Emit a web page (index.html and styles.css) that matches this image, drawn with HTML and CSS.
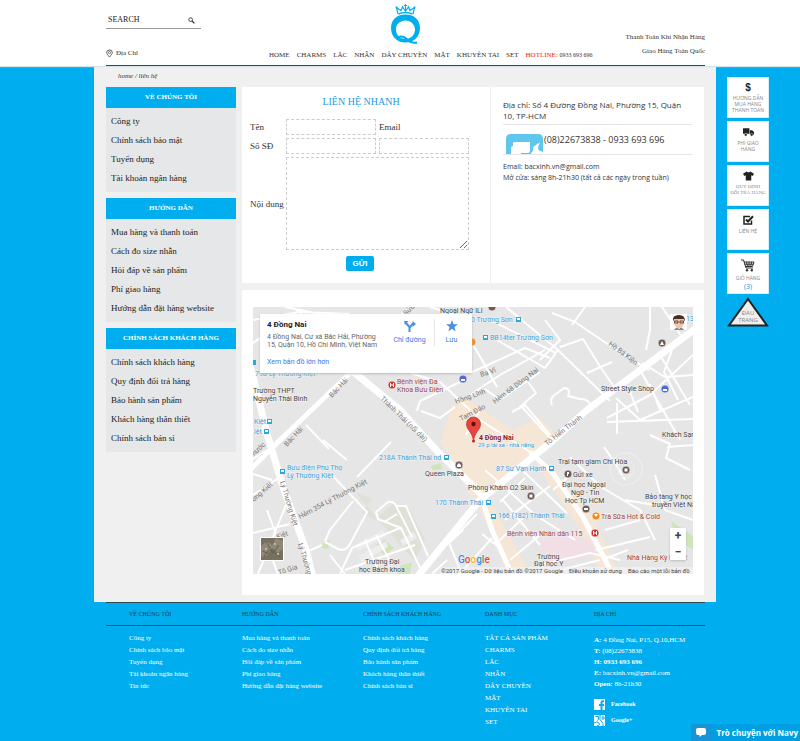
FILE: index.html
```html
<!DOCTYPE html>
<html lang="vi">
<head>
<meta charset="utf-8">
<meta name="viewport" content="width=device-width, initial-scale=1">
<title>Liên hệ</title>
<link rel="stylesheet" href="styles.css">
</head>
<body>
<header class="site-header">
  <div class="header-inner">
    <form class="search">
      <input type="text" aria-label="Search" placeholder="SEARCH">
      <button type="submit" aria-label="Search">
        <svg viewBox="0 0 8 8" width="7" height="7"><circle cx="3" cy="3" r="2.1" fill="none" stroke="#333" stroke-width="1"/><path d="M4.6 4.6 7.3 7.3" stroke="#333" stroke-width="1.4"/></svg>
      </button>
    </form>
    <a class="logo" href="#" aria-label="Home">
      <svg viewBox="390 2 32 43" width="32" height="43">
        <g fill="none" stroke="#00aeef">
          <path d="M398 14 396.500 7.500 401 10.500 402.500 7 405.500 11 408.500 7 410 10.500 414.500 7.500 413 14" stroke-width="1.200"/>
          <path d="M405.500 4V10M403.800 5.500H407.200" stroke-width="1"/>
          <path d="M398.500 14Q405.500 11 412.500 14" stroke-width="1.600"/>
        </g>
        <g fill="#00aeef"><circle cx="396.500" cy="7.500" r=".9"/><circle cx="402.500" cy="7" r=".8"/><circle cx="408.500" cy="7" r=".8"/><circle cx="414.500" cy="7.500" r=".9"/></g>
        <path fill="#00aeef" fill-rule="evenodd" d="M405.500 14.500C396 14.500 391 20.500 391 28.200S396.500 42.500 405.500 42.500 420 36 420 28.200 415 14.500 405.500 14.500ZM405.500 20.500C411 20.500 415 24.500 415 29.500S411 39 405.500 39 396 35 396 29.500 400 20.500 405.500 20.500Z"/>
        <path d="M398 40C397 35.500 403 35.500 406 38.500S412 43.500 417 42.500" fill="none" stroke="#00aeef" stroke-width="2"/>
      </svg>
    </a>
    <a class="place" href="#">
      <svg viewBox="0 0 8 9" width="7" height="9"><path d="M4 8.500C2 6 .8 4.800.8 3.400a3.200 2.900 0 0 1 6.400 0C7.200 4.800 6 6 4 8.500Z" fill="none" stroke="#444"/><circle cx="4" cy="3.500" r="1.200" fill="none" stroke="#444" stroke-width=".8"/></svg>
      Địa Chỉ
    </a>
    <nav class="main-nav">
      <a href="#">HOME</a><a href="#">CHARMS</a><a href="#">LẮC</a><a href="#">NHẪN</a><a href="#">DÂY CHUYỀN</a><a href="#">MẶT</a><a href="#">KHUYÊN TAI</a><a href="#">SET</a>
      <span><b class="hot">HOTLINE:</b> <span class="number">0933 693 696</span></span>
    </nav>
    <div class="promo"><span>Thanh Toán Khi Nhận Hàng</span><span>Giao Hàng Toàn Quốc</span></div>
  </div>
</header>

<div class="page">
  <main class="wrapper">
    <p class="crumbs">home / liên hệ</p>
    <div class="columns">
      <aside class="sidebar">
        <section><h2>VỀ CHÚNG TÔI</h2>
          <ul><li><a href="#">Công ty</a></li><li><a href="#">Chính sách bảo mật</a></li><li><a href="#">Tuyển dụng</a></li><li><a href="#">Tài khoản ngân hàng</a></li></ul></section>
        <section><h2>HƯỚNG DẪN</h2>
          <ul><li><a href="#">Mua hàng và thanh toán</a></li><li><a href="#">Cách đo size nhẫn</a></li><li><a href="#">Hỏi đáp về sản phẩm</a></li><li><a href="#">Phí giao hàng</a></li><li><a href="#">Hướng dẫn đặt hàng website</a></li></ul></section>
        <section><h2>CHÍNH SÁCH KHÁCH HÀNG</h2>
          <ul><li><a href="#">Chính sách khách hàng</a></li><li><a href="#">Quy định đổi trả hàng</a></li><li><a href="#">Bảo hành sản phẩm</a></li><li><a href="#">Khách hàng thân thiết</a></li><li><a href="#">Chính sách bán sỉ</a></li></ul></section>
      </aside>

      <div class="content">
        <div class="contact">
          <form class="quick">
            <h1>LIÊN HỆ NHANH</h1>
            <div class="fields">
              <label for="name">Tên</label><input id="name" type="text"><label for="email">Email</label>
              <label for="phone">Số SĐ</label><input id="phone" type="text"><input id="email" type="text">
              <label for="body">Nội dung</label><textarea id="body"></textarea>
            </div>
            <button type="submit">GỬI</button>
          </form>
          <div class="info">
            <p class="address">Địa chỉ: Số 4 Đường Đồng Nai, Phường 15, Quận 10, TP-HCM</p>
            <p class="phone">
              <svg viewBox="0 0 37 20" width="37" height="20"><path d="M0 20V5Q0 0 5 0H32Q37 0 37 5V20Z" fill="#5fc6ee"/><path d="M5 20V14Q5 12 7 12V9Q7 8 9 8H24V17Q24 19 22 19H15V20ZM25 20Q25 18 27 17V14Q27 12 29 12Q31 9 34 9Q32 12 32 15Q33 17 37 18V20Z" fill="#fff"/></svg>
              <span>(08)22673838 - 0933 693 696</span>
            </p>
            <p class="hours">Email: bacxinh.vn@gmail.com<br>Mở cửa: sáng 8h-21h30 (tất cả các ngày trong tuần)</p>
          </div>
        </div>

        <section class="map-card">
          <div class="map">
            <svg class="map-art" viewBox="253 307 440 267" preserveAspectRatio="xMidYMid slice">
              <rect x="253" y="307" width="440" height="267" fill="#e6e6e6"/>
              <g fill="#f6e6d6">
                <path d="M452 405 466 398 482 409 540 449 528 468 497 482 472 487 440 442Z"/>
                <path d="M513 430 540 417 560 440 535 458 516 444Z"/>
                <path d="M535 462 552 468 592 516 620 574H602L580 530Z"/>
                <path d="M476 500 490 500 530 574H508Z"/>
                <path d="M466 490 480 480 484 494 474 500Z"/>
              </g>
              <path d="M537 543 560 530 590 540 598 555 545 566Z" fill="#f2dfe5"/>
              <g fill="#cfe5b8"><path d="M671 521 693 536V550L676 538Z"/><path d="M376 545 385 540 394 548 384 556Z"/><path d="M323 543 330 540 328 549 321 548Z"/><path d="M431 466 441 463 442 469 433 470Z"/><path d="M400 566 412 562 410 574H398Z"/></g>
              <path d="M355 492 372 499 362 512 375 520 393 504 410 510 425 540 415 560 400 545" fill="#dfe0d6"/>
              <g fill="#ededed"><path d="M355 545 383 530 386 536 358 551ZM358 556 386 541 388 547 362 562ZM400 540 414 532 417 538 403 546Z"/></g>
              <g fill="none" stroke="#fff" stroke-linejoin="round">
                <g stroke-width="7">
                  <path d="M417 577 480 500 550 443 587 410 627 380 696 328"/>
                  <path d="M250 365 268 437 283 487 306 550 313 577"/>
                  <path d="M345 365 400 410 438 452 480 493"/>
                </g>
                <g stroke-width="5">
                  <path d="M350 373 277 443 250 470"/>
                  <path d="M480 493 492 530 513 577"/>
                  <path d="M530 452 552 472 583 517 614 577"/>
                </g>
                <g stroke-width="2">
                  <path d="M470 340 482 360 497 387M470 373 525 348 550 358M497 340 545 368 558 350 506 307M492 321 556 353M470 395 500 375 545 350"/>
                  <path d="M558 350 610 401M545 320 560 340 540 360M552 313 575 322 612 347 649 370M585 307 572 325M560 347 583 339 601 368 617 391M587 373 612 362"/>
                  <path d="M522 407 550 438M512 412 525 405 550 435M528 382 536 393 520 407M552 405Q549 398 556 394L564 388Q571 388 568 396L580 399Q590 398 592 410L588 408"/>
                  <path d="M650 307V330L646 350M662 307 682 337M693 355 650 395 607 418M642 363 665 377 693 375M640 370 680 440M660 355 690 405M616 398 640 420 693 397M607 422 693 419M617 403V434M650 384 660 410M630 392 638 412M672 350 664 372 678 400"/>
                  <path d="M410 373 440 382 470 410M480 410 466 435M417 411 420 401 460 382M421 411 440 418 455 407M485 389 500 400 540 372M480 420 535 455"/>
                  <path d="M253 320 300 312 350 314M294 308 306 318M285 307 320 314M253 343 260 338M410 307 400 316M430 307 460 316"/>
                  <path d="M306 425 329 449M323 440 347 460M253 431 262 429 269 445M253 459 267 450M253 495 283 475M253 474 272 480M258 574 286 505M267 510 280 545M253 533 290 524M265 540 278 574"/>
                  <path d="M330 473 367 512 350 544Q346 552 338 549L325 542M325 541 330 530 353 501M306 552 322 545M357 477 391 442"/>
                  <path d="M423 574 401 528 378 519 376 512 388 502Q394 501 396 506L412 537M384 522 397 514M340 574 352 548 400 528M345 570 415 545M330 555 345 574M365 540 378 570M376 535 392 565M396 506 406 506 428 556"/>
                  <path d="M463 530 449 543 462 574M449 543 477 514M460 574 492 538M432 574 447 560M482 534 500 548"/>
                  <path d="M485 470 510 492 535 515 575 540M500 502 525 478M505 520 550 486M500 540 525 516M510 560 540 535M503 500 540 545M520 468 545 492 567 513M570 457 601 487 640 510 655 540M567 478 553 490"/>
                  <path d="M604 447 615 463 625 480M650 435 670 444 666 458 690 470M693 445 667 447M655 475 665 510 693 520M625 500 655 505M602 560 628 550M605 530 640 520M596 550 650 537M540 565 590 553 620 560M545 574 600 560"/>
                </g>
                <g stroke="#ededed" stroke-width="1.500"><circle cx="626" cy="469" r="16"/><circle cx="626" cy="469" r="8"/></g>
              </g>
              <g class="road">
                <text transform="translate(287 447) rotate(-47)">Bắc Hải</text><text transform="translate(332 398) rotate(-47)">Bắc Hải</text>
                <text transform="translate(380 399) rotate(44)">Thành Thái (nối dài)</text>
                <text transform="translate(456 404) rotate(-20)">Hồng Lĩnh</text><text transform="translate(461 421) rotate(-27)">Tam Đảo</text>
                <text transform="translate(481 377) rotate(-18)">Ba Vì</text><text transform="translate(495 404) rotate(-37)">Hẻm 68 Đồng Nai</text>
                <text transform="translate(608 345) rotate(36)">Hồ Bá Kiện</text><text transform="translate(547 446) rotate(-38)">Tô Hiến Thành</text>
                <text transform="translate(300 519) rotate(-28)">Hẻm 354 Lý Thường Kiệt</text>
                <text transform="translate(280 482) rotate(73)">Lý Thường Kiệt</text><text transform="translate(298 544) rotate(73)">Lý Thường</text>
                <text transform="translate(254 502) rotate(-42)">ờng Kiệt</text><text transform="translate(254 456) rotate(-42)">hước</text><text transform="translate(277 539) rotate(-18)">Kiệt</text><text transform="translate(279 575) rotate(-18)">Tô Gia</text>
                <text transform="translate(406 316) rotate(-45)">Bửu</text>
              </g>
              <g class="transit">
                <text x="471" y="322">0 Trường Sơn</text><text x="490" y="340">BB14ter Trường Sơn</text><text x="255" y="376">79B Lý Thường Kiệt</text>
                <text x="254" y="424">Kiệt</text><text x="254" y="434">iệt</text><text x="287" y="470">Bưu điện Phú Thọ</text><text x="287" y="478">Lý Thường Kiệt</text>
                <text x="379" y="460">218A Thành Thái nd</text><text x="435" y="505">170 Thành Thái</text><text x="498" y="518">166 (182) Thành Thái</text>
                <text x="496" y="471">87 Sư Vạn Hạnh</text><text x="686" y="321">13</text><text class="tiny" x="478" y="447">29 p lái xe - nhà riêng</text>
              </g>
              <g class="poi">
                <text x="440" y="313">Ngoại Ngữ ILI</text><text x="253" y="393">Trường THPT</text><text x="253" y="401">Nguyễn Thái Bình</text>
                <text x="601" y="391">Street Style Shop</text><text x="662" y="437">Khách Sạn</text><text x="425" y="476">Queen Plaza</text>
                <text x="468" y="490">Phòng Khám O2 Skin</text><text x="558" y="464">Trại tạm giam Chí Hòa</text><text x="573" y="477">Gửi xe</text>
                <text x="562" y="487">Đại học Ngoại</text><text x="571" y="495">Ngữ - Tin</text><text x="565" y="503">Học Tp HCM</text>
                <text x="645" y="499">Bảo tàng Y học</text><text x="652" y="507">truyền Việt Nam</text><text x="365" y="564">Trường Đại</text><text x="359" y="572">học Bách khoa</text>
                <text x="537" y="559">Trường</text><text x="534" y="566">Đại học Y</text>
              </g>
              <g class="red">
                <text x="397" y="384">Bệnh viện Đa</text><text x="397" y="392">Khoa Bưu Điện</text><text x="507" y="536">Bệnh viện Nhân dân 115</text>
                <text x="601" y="519">Trà Sữa Hot &amp; Cold</text><text x="627" y="560">Nhà Hàng Kỳ Hòa 2</text><text class="strong" x="479" y="440">4 Đồng Nai</text>
              </g>
              <g fill="#2aa7e0"><path d="M516 317h5v5h-5zM483 335h5v5h-5zM267 419h5v5h-5zM264 429h5v5h-5zM280 469h5v5h-5zM444 455h5v5h-5zM486 500h5v5h-5zM491 514h5v5h-5zM549 466h5v5h-5zM253 360h3v5h-3z"/></g>
              <path fill="#fff" d="M517 318h3v2h-3zM484 336h3v2h-3zM268 420h3v2h-3zM265 430h3v2h-3zM281 470h3v2h-3zM445 456h3v2h-3zM487 501h3v2h-3zM492 515h3v2h-3zM550 467h3v2h-3z"/>
              <g stroke="#fff" stroke-width=".6">
                <g fill="#cc3333"><circle cx="392" cy="385" r="4"/><circle cx="595" cy="533" r="4"/></g>
                <g fill="#705c57"><circle cx="662" cy="343" r="4"/><circle cx="459" cy="465" r="4"/><circle cx="531" cy="496" r="4"/><circle cx="626" cy="470" r="4"/><circle cx="568" cy="474" r="4"/><circle cx="586" cy="509" r="4"/><circle cx="492" cy="307" r="4"/></g>
                <g fill="#f28b1c"><circle cx="596" cy="516" r="4"/><circle cx="472" cy="342" r="4"/></g>
                <g fill="#5367d5"><circle cx="463" cy="379" r="4"/><circle cx="665" cy="389" r="4"/></g>
              </g>
              <g fill="#fff"><path d="M390 383h1v1.500h2V383h1v4h-1v-1.500h-2V387h-1zM593 531h1v1.500h2V531h1v4h-1v-1.500h-2V535h-1zM457 465l2-2 2 2v2h-4zM660 345l2-4 2 4zM461 379h4v2h-4zM663 389h4v2h-4zM529.500 494.500h3v3h-3zM624.500 468.500h3v3h-3zM584 508h4v2h-4zM594 514h4l-2 3zM567 472h2v2h-1v2h-1z"/></g>
              <path d="M473.500 441C472.500 432 466.500 430 466.500 424a7 7 0 0 1 14 0C480.500 430 474.500 432 473.500 441Z" fill="#e8453c" stroke="#b3322b" stroke-width=".7"/><circle cx="473.500" cy="424" r="2.200" fill="#5a1410"/><circle cx="473.500" cy="441" r="1.500" fill="#c22"/>
              <rect x="440" y="567" width="253" height="7" fill="#f2f2f2" opacity=".7"/>
              <text class="google" x="458" y="563"><tspan fill="#4285f4">G</tspan><tspan fill="#ea4335">o</tspan><tspan fill="#fbbc05">o</tspan><tspan fill="#4285f4">g</tspan><tspan fill="#34a853">l</tspan><tspan fill="#ea4335">e</tspan></text>
              <text class="legal" x="441" y="573">©2017 Google - Dữ liệu bản đồ ©2017 Google</text><text class="legal" x="569" y="573">Điều khoản sử dụng</text><text class="legal" x="628" y="573">Báo cáo một lỗi bản đồ</text>
              <rect x="260" y="537" width="24" height="24" rx="1" fill="#fff"/><rect x="261" y="538" width="22" height="22" fill="#77705f"/>
              <path d="M261 546l6-5 5 4 4-7 7 3v8l-5 4-6-5-4 7-7 2z" fill="#8e8874"/><path d="M264 556l5-6 4 3 6-8M266 541l5 9 10 8M262 551l8 3" stroke="#626353" fill="none" stroke-width="1"/><path d="M265 548h2v2h-2zM274 543h2v2h-2zM277 553h2v2h-2z" fill="#b8b4a5"/>
              <rect x="670" y="314" width="17" height="16" fill="#fff"/><path d="M673 321Q672 315 679 315 685 315 685 321L682 319H675Z" fill="#4b2d20"/><path d="M674 319H684V324Q682 328 679 328T674 324Z" fill="#f1c6a8"/><path d="M674.500 321h3.500v2h-3.500zM680 321h3.500v2h-3.500z" fill="none" stroke="#222" stroke-width=".7"/><path d="M674 330Q675 328 677 327.500L679 329 681 327.500Q683 328 684 330Z" fill="#888"/>
            </svg>
            <div class="place-card">
              <div class="place-text"><h2>4 Đồng Nai</h2><p>4 Đồng Nai, Cư xá Bắc Hải, Phường 15, Quận 10, Hồ Chí Minh, Việt Nam</p><a href="#">Xem bản đồ lớn hơn</a></div>
              <a class="action directions" href="#"><svg viewBox="0 0 12 12" width="12" height="12"><path d="M5.500 12V7L2 3M5.500 8 8.500 4H10" fill="none" stroke="#4a90e2" stroke-width="2"/><path d="M0 1H4.500L1 5ZM8.500 1 12 4 8.500 7Z" fill="#4a90e2"/></svg>Chỉ đường</a>
              <a class="action save" href="#"><svg viewBox="0 0 12 12" width="12" height="12"><path d="M6 0 7.500 4.200H12L8.400 7 9.700 11.500 6 8.800 2.300 11.500 3.600 7 0 4.200H4.500Z" fill="#4a90e2"/></svg>Lưu</a>
            </div>
            <div class="zoomer"><button type="button" aria-label="Zoom in">+</button><button type="button" aria-label="Zoom out">−</button></div>
          </div>
        </section>
      </div>
    </div>
  </main>

  <aside class="rail">
    <a href="#"><b class="dollar">$</b>HƯỚNG DẪN MUA HÀNG THANH TOÁN</a>
    <a href="#"><svg viewBox="0 0 12 10" width="11" height="10"><path d="M0 1H7V7H0ZM7.500 3H10L12 5V8H7.500Z" fill="#222"/><circle cx="3" cy="8" r="1.500" fill="#222" stroke="#fff" stroke-width=".5"/><circle cx="9.500" cy="8" r="1.500" fill="#222" stroke="#fff" stroke-width=".5"/></svg><span>PHÍ GIAO<br>HÀNG</span></a>
    <a class="serif" href="#"><svg viewBox="0 0 12 10" width="11" height="10"><path d="M4 0Q6 2 8 0L12 2.500 10.500 5 9 4.300V10H3V4.300L1.500 5 0 2.500Z" fill="#222"/></svg><span>QUY ĐỊNH<br>ĐỔI TRẢ HÀNG</span></a>
    <a href="#"><svg viewBox="0 0 11 10" width="11" height="10"><path d="M8.500 5.500V9H1V1.500H7" fill="none" stroke="#222" stroke-width="1.500"/><path d="M3 4.500 5 6.500 10 1.200" fill="none" stroke="#222" stroke-width="2"/></svg>LIÊN HỆ</a>
    <a href="#"><svg viewBox="0 0 14 13" width="14" height="13"><path d="M0 1H2.500L5 9H12M3 3H13L11.500 7.500H4.500M5.500 3 6.500 7.500M8 3V7.500M10.500 3 9.800 7.500M3.500 5.200H12.500" fill="none" stroke="#333"/><circle cx="6" cy="11.300" r="1.200" fill="#333"/><circle cx="10.800" cy="11.300" r="1.200" fill="#333"/></svg>GIỎ HÀNG<span class="count">(3)</span></a>
    <a class="top" href="#"><svg viewBox="0 0 42 30" width="42" height="30"><path d="M21 2 40 28.500H2Z" fill="#efefef" stroke="#222" stroke-width="2"/></svg><span>ĐẦU<br>TRANG</span></a>
  </aside>
</div>

<footer class="site-footer">
  <div class="foot-grid foot-head"><h3>VỀ CHÚNG TÔI</h3><h3>HƯỚNG DẪN</h3><h3>CHÍNH SÁCH KHÁCH HÀNG</h3><h3>DANH MỤC</h3><h3>ĐỊA CHỈ</h3></div>
  <div class="foot-grid foot-body">
    <ul><li><a href="#">Công ty</a></li><li><a href="#">Chính sách bảo mật</a></li><li><a href="#">Tuyển dụng</a></li><li><a href="#">Tài khoản ngân hàng</a></li><li><a href="#">Tin tức</a></li></ul>
    <ul><li><a href="#">Mua hàng và thanh toán</a></li><li><a href="#">Cách đo size nhẫn</a></li><li><a href="#">Hỏi đáp về sản phẩm</a></li><li><a href="#">Phí giao hàng</a></li><li><a href="#">Hướng dẫn đặt hàng website</a></li></ul>
    <ul><li><a href="#">Chính sách khách hàng</a></li><li><a href="#">Quy định đổi trả hàng</a></li><li><a href="#">Bảo hành sản phẩm</a></li><li><a href="#">Khách hàng thân thiết</a></li><li><a href="#">Chính sách bán sỉ</a></li></ul>
    <ul><li><a href="#">TẤT CẢ SẢN PHẨM</a></li><li><a href="#">CHARMS</a></li><li><a href="#">LẮC</a></li><li><a href="#">NHẪN</a></li><li><a href="#">DÂY CHUYỀN</a></li><li><a href="#">MẶT</a></li><li><a href="#">KHUYÊN TAI</a></li><li><a href="#">SET</a></li></ul>
    <div class="reach">
      <p><b>A:</b> 4 Đồng Nai, P15, Q.10,HCM</p><p><b>T:</b> (08)22673838</p><p><b>H: 0933 693 696</b></p><p><b>E:</b> bacxinh.vn@gmail.com</p><p><b>Open:</b> 8h-21h30</p>
      <a class="social" href="#"><svg viewBox="0 0 11 11" width="11" height="11"><path d="M0 0H11V11H8.500V7H10V5H8.500V3.800Q8.500 3 10 3V1.300Q6.500 1 6.500 3.500V5H5V7H6.500V11H0Z" fill="#fff"/></svg>Facebook</a>
      <a class="social" href="#"><svg viewBox="0 0 11 11" width="11" height="11"><path d="M0 0H11V11H0Z" fill="#fff"/><path d="M1.500 1.500H4.500V4.500L3 5.500M6 0V4.500L9 8.500V11M0 8Q3 6 5 8T3 11M7.500 3H11M9 1V5" fill="none" stroke="#00aeef" stroke-width="1"/></svg>Google+</a>
    </div>
  </div>
</footer>
<button class="chat" type="button"><span class="bubble"><svg viewBox="0 0 10 9" width="10" height="9"><path d="M2 0H8Q10 0 10 2V5Q10 7 8 7H6L3.500 9V7H2Q0 7 0 5V2Q0 0 2 0Z" fill="#fff"/></svg></span><span class="chat-text">Trò chuyện với Navy</span></button>
</body>
</html>
```
FILE: styles.css
```css
* { box-sizing: border-box; }
body {
  margin: 0;
  background: #00aeef;
  color: #333;
  font: 9px/12px "Liberation Serif", serif;
}
h1, h2, h3, p, ul { margin: 0; padding: 0; font-weight: normal; }
ul { list-style: none; }
a { color: inherit; text-decoration: none; }
svg { display: block; flex: none; }
button, input, textarea { font: inherit; margin: 0; padding: 0; border: 0; background: none; border-radius: 0; }
button { cursor: pointer; }

.site-header { background: #fff; padding: 0 95px 0 106px; box-shadow: 0 1px 1px #cfe3ea; position: relative; }
.header-inner {
  display: grid;
  grid-template: 45px 20px / 163px 1fr auto;
  border-bottom: 1px solid #444;
  font-size: 7px;
}
.search { grid-area: 1 / 1; width: 95px; height: 17px; margin-top: 12px; border-bottom: 1px solid #999; display: flex; align-items: center; padding: 0 6px 0 2px; font-size: 8px; }
.search input { flex: 1; min-width: 0; outline: 0; }
.search input::placeholder { color: #222; opacity: 1; }
.logo { grid-area: 1 / 1 / 2 / 4; justify-self: center; margin-top: 2px; }
.place { grid-area: 2 / 1; display: flex; align-items: center; gap: 3px; padding-bottom: 4px; }
.main-nav { grid-area: 2 / 2; display: flex; align-items: center; gap: 7px; white-space: nowrap; padding-bottom: 1px; }
.hot { color: #f01818; font-weight: normal; }
.number { font-size: 6px; }
.promo { grid-area: 1 / 3 / 3 / 4; display: flex; flex-direction: column; line-height: 14px; text-align: right; padding-top: 30px; }

.page { display: grid; grid-template-columns: 94px minmax(0, 1fr) 84px; }
.wrapper { grid-column: 2; background: #f0f0f0; padding: 0 12px 7px; }
.crumbs { font-size: 7px; font-style: italic; line-height: 21px; padding-left: 12px; }
.columns { display: grid; grid-template-columns: 130px minmax(0, 1fr); gap: 6px; align-items: start; }
.sidebar { display: grid; gap: 6px; }
.sidebar section { background: #e6e7e8; }
.sidebar h2 { background: #00aeef; color: #fff; font-size: 7px; font-weight: bold; line-height: 21px; text-align: center; }
.sidebar ul { padding: 4px 5px; line-height: 19px; color: #222; }

.content { display: grid; gap: 7px; }
.contact { display: grid; grid-template-columns: 248px minmax(0, 1fr); gap: 1px; }
.quick, .info, .map-card { background: #fff; }
.quick { padding: 8px 8px 12px; display: flex; flex-direction: column; }
.quick h1 { color: #1f9be0; font-size: 10px; line-height: 14px; text-align: center; margin-right: 10px; }
.fields { display: grid; grid-template: 16px 16px 93px / 33px 90px 90px; gap: 3px; align-items: center; margin-top: 10px; }
.fields label { white-space: nowrap; }
.fields input, .fields textarea { width: 100%; height: 100%; border: 1px dashed #ccc; outline: 0; }
.fields textarea { grid-column: 2 / 4; display: block; }
.quick button { align-self: center; margin: 6px 12px 0 0; padding: 0 6px; border-radius: 2px; background: #00aeef; color: #fff; font: bold 8px/15px "Liberation Sans", sans-serif; }
.info { padding: 12px 12px 0; font-family: "Open Sans", "Noto Sans", sans-serif; }
.address { font-size: 8px; line-height: 11px; padding-bottom: 3px; border-bottom: 1px solid #e5e5e5; }
.phone { display: flex; align-items: flex-end; padding: 9px 0 0 3px; font-size: 9px; gap: 1px; border-bottom: 1px solid #e5e5e5; }
.phone span { align-self: flex-start; white-space: nowrap; }
.hours { font-size: 7px; line-height: 11px; padding-top: 6px; }

.map-card { padding: 17px 11px 21px; }
.map { position: relative; font-family: Roboto, sans-serif; }
.map-art { width: 100%; aspect-ratio: 440 / 267; font-size: 7px; }
.road { fill: #777; }
.transit { fill: #3aa0dc; }
.poi { fill: #444; }
.red { fill: #a0403c; }
.strong { font-weight: bold; fill: #8b1a1a; }
.tiny { font-size: 6px; }
.legal { font-size: 6px; fill: #444; }
.map-art .poi text, .map-art .red text, .map-art .transit text, .map-art .google { paint-order: stroke; stroke: #f3f3f3; stroke-width: 1px; }
.google { font-size: 10px; font-weight: 500; }
.place-card { position: absolute; left: 7px; top: 7px; width: 212px; height: 59px; padding: 5px 4px 5px 7px; display: flex; background: #fff; box-shadow: 0 1px 2px #bbb; font-size: 7px; line-height: 8px; color: #666; }
.place-text { flex: 1; }
.place-text h2 { font-size: 8px; font-weight: bold; line-height: 11px; color: #222; margin-bottom: 3px; }
.place-text p { margin-bottom: 9px; }
.place-card a { color: #3b78e7; }
.action { display: flex; flex-direction: column; align-items: center; gap: 4px; height: 27px; white-space: nowrap; padding-top: 1px; }
.directions { width: 50px; border-right: 1px solid #e5e5e5; }
.save { width: 33px; }
.zoomer { position: absolute; right: 7px; bottom: 14px; width: 16px; display: grid; background: #fff; box-shadow: 0 1px 2px #bbb; }
.zoomer button { height: 16px; color: #444; font-size: 12px; font-weight: bold; line-height: 14px; }

.rail { padding: 11px 31px 0 11px; display: grid; gap: 3px; align-content: start; }
.rail a { height: 41px; background: #fff; border: 1px solid #d5eff9; padding-top: 5px; display: flex; flex-direction: column; align-items: center; gap: 3px; font: 5px/6px "Open Sans", sans-serif; color: #888; text-align: center; }
.rail .dollar { font: bold 10px/9px "Liberation Sans", sans-serif; color: #222; }
.rail .serif { font-family: "Liberation Serif", serif; white-space: nowrap; }
.rail .count { font-size: 7px; color: #0a9be8; }
.rail .top { position: relative; height: 30px; padding: 0; border: 0; background: none; }
.rail .top span { position: absolute; left: 0; right: 0; bottom: 3px; font-size: 6px; line-height: 7px; }

.site-footer { margin: 0 95px 0 106px; border-top: 1px solid #2b4b5a; min-height: 139px; color: #fff; }
.foot-grid { display: grid; grid-template-columns: 113fr 121fr 122fr 109fr 111fr; padding-left: 23px; white-space: nowrap; }
.foot-head { border-bottom: 1px solid #2b4b5a; color: #173f52; }
.foot-head h3 { font-size: 6px; line-height: 21px; padding-top: 1px; }
.foot-body { padding-top: 6px; font-size: 7px; }
.reach { line-height: 11px; padding-top: 3px; }
.social { display: flex; align-items: center; gap: 6px; margin-top: 5px; font-size: 6px; font-weight: bold; }
.reach p + .social { margin-top: 9px; }

.chat { position: fixed; right: 0; bottom: 0; height: 17px; display: flex; background: #009fe3; color: #fff; font: bold 8px/17px "Open Sans", sans-serif; }
.bubble { width: 20px; height: 17px; display: grid; place-items: center; background: #1793d6; }
.chat-text { padding: 0 2px 0 6px; }
```
